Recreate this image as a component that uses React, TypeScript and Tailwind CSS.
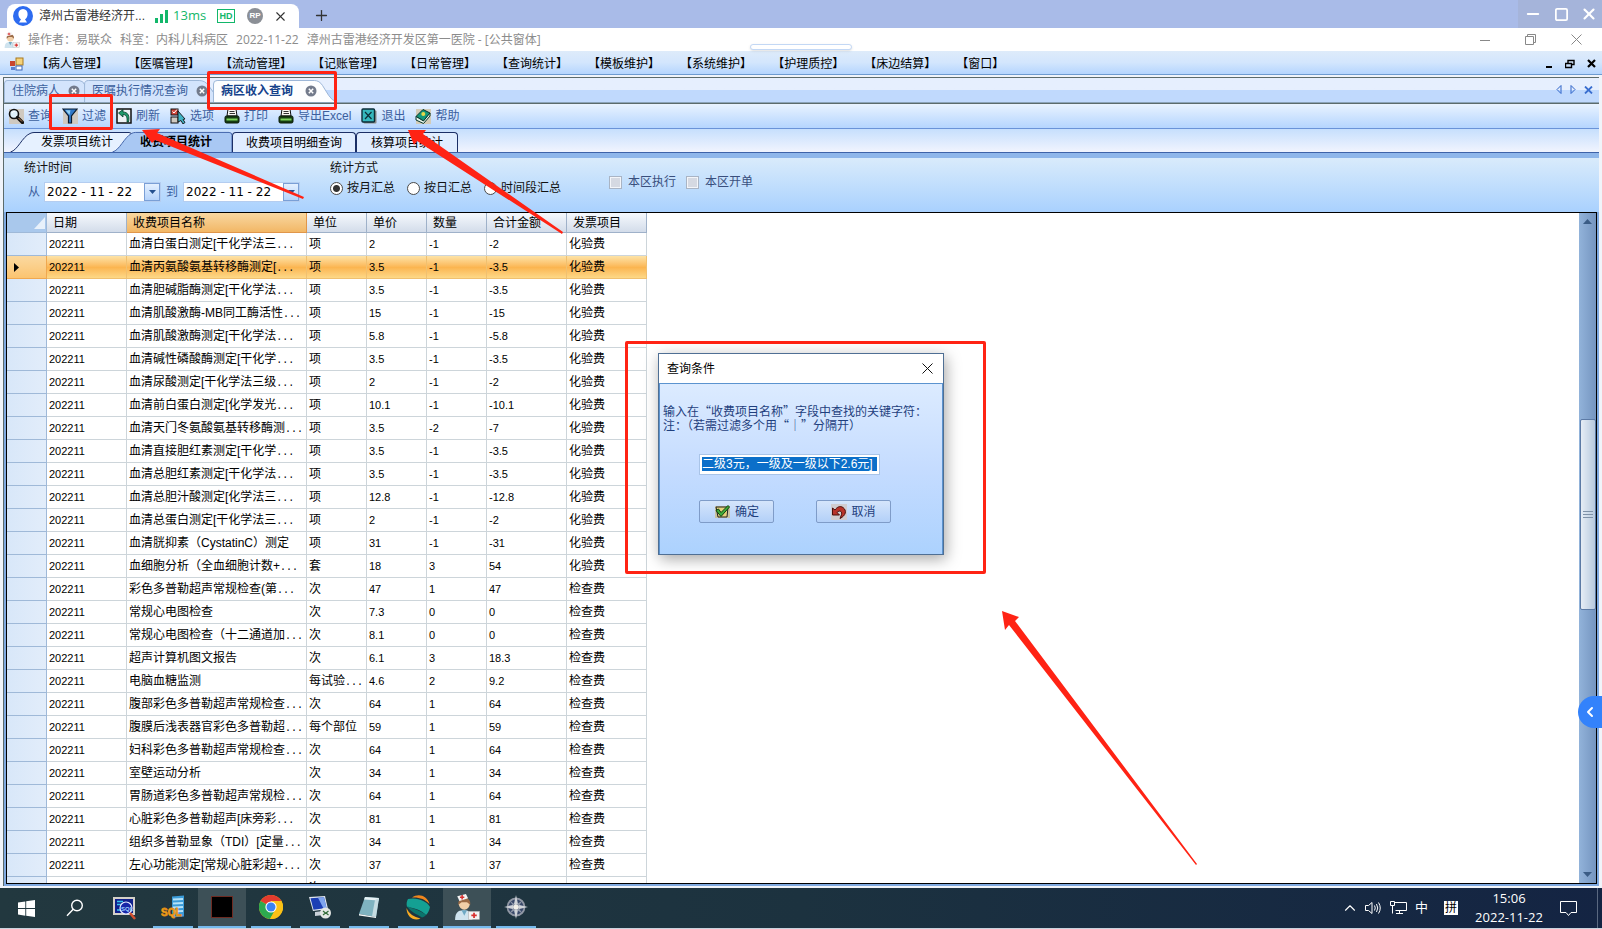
import type { ReactNode } from "react";
import { ChevronUp, ChevronLeft, Minus, Plus, Square, X } from "lucide-react";

interface ChargeRow {
  name: string;
  unit: string;
  price: string;
  count: string;
  total: string;
  invoice: string;
}

const menus = [
  "【病人管理】",
  "【医嘱管理】",
  "【流动管理】",
  "【记账管理】",
  "【日常管理】",
  "【查询统计】",
  "【模板维护】",
  "【系统维护】",
  "【护理质控】",
  "【床边结算】",
  "【窗口】",
];

const data: string[][] = [
  ["血清白蛋白测定[干化学法三...", "项", "2", "-1", "-2", "化验费"],
  ["血清丙氨酸氨基转移酶测定[...", "项", "3.5", "-1", "-3.5", "化验费"],
  ["血清胆碱脂酶测定[干化学法...", "项", "3.5", "-1", "-3.5", "化验费"],
  ["血清肌酸激酶-MB同工酶活性...", "项", "15", "-1", "-15", "化验费"],
  ["血清肌酸激酶测定[干化学法...", "项", "5.8", "-1", "-5.8", "化验费"],
  ["血清碱性磷酸酶测定[干化学...", "项", "3.5", "-1", "-3.5", "化验费"],
  ["血清尿酸测定[干化学法三级...", "项", "2", "-1", "-2", "化验费"],
  ["血清前白蛋白测定[化学发光...", "项", "10.1", "-1", "-10.1", "化验费"],
  ["血清天门冬氨酸氨基转移酶测...", "项", "3.5", "-2", "-7", "化验费"],
  ["血清直接胆红素测定[干化学...", "项", "3.5", "-1", "-3.5", "化验费"],
  ["血清总胆红素测定[干化学法...", "项", "3.5", "-1", "-3.5", "化验费"],
  ["血清总胆汁酸测定[化学法三...", "项", "12.8", "-1", "-12.8", "化验费"],
  ["血清总蛋白测定[干化学法三...", "项", "2", "-1", "-2", "化验费"],
  ["血清胱抑素（CystatinC）测定", "项", "31", "-1", "-31", "化验费"],
  ["血细胞分析（全血细胞计数+...", "套", "18", "3", "54", "化验费"],
  ["彩色多普勒超声常规检查(第...", "次", "47", "1", "47", "检查费"],
  ["常规心电图检查", "次", "7.3", "0", "0", "检查费"],
  ["常规心电图检查（十二通道加...", "次", "8.1", "0", "0", "检查费"],
  ["超声计算机图文报告", "次", "6.1", "3", "18.3", "检查费"],
  ["电脑血糖监测", "每试验...", "4.6", "2", "9.2", "检查费"],
  ["腹部彩色多普勒超声常规检查...", "次", "64", "1", "64", "检查费"],
  ["腹膜后浅表器官彩色多普勒超...", "每个部位", "59", "1", "59", "检查费"],
  ["妇科彩色多普勒超声常规检查...", "次", "64", "1", "64", "检查费"],
  ["室壁运动分析", "次", "34", "1", "34", "检查费"],
  ["胃肠道彩色多普勒超声常规检...", "次", "64", "1", "64", "检查费"],
  ["心脏彩色多普勒超声[床旁彩...", "次", "81", "1", "81", "检查费"],
  ["组织多普勒显象（TDI）[定量...", "次", "34", "1", "34", "检查费"],
  ["左心功能测定[常规心脏彩超+...", "次", "37", "1", "37", "检查费"],
  ["一", "次", "", "", "", ""],
];

const rows: ChargeRow[] = data.map(([name, unit, price, count, total, invoice]) => ({
  name,
  unit,
  price,
  count,
  total,
  invoice,
}));

const columns = [
  { title: "日期", width: "w-[80px]" },
  { title: "收费项目名称", width: "w-[180px]" },
  { title: "单位", width: "w-[60px]" },
  { title: "单价", width: "w-[60px]" },
  { title: "数量", width: "w-[60px]" },
  { title: "合计金额", width: "w-[80px]" },
  { title: "发票项目", width: "w-[80px]" },
];

/* ---------- toolbar icons ---------- */

const SearchIcon = () => (
  <svg width="16" height="16" viewBox="0 0 16 16">
    <rect x="1" y="1" width="15" height="15" fill="#cfc9c0" />
    <circle cx="6" cy="6" r="4.5" fill="#dff1fb" stroke="#111" strokeWidth="1.6" />
    <path d="M4 5a2.5 2.5 0 0 1 3-1.500" stroke="#fff" fill="none" />
    <path d="M9.500 9.500l5 5" stroke="#111" strokeWidth="3.200" strokeLinecap="round" />
    <path d="M10.500 10l3.500 3.500" stroke="#c98a5a" strokeWidth="1" />
  </svg>
);

const FilterIcon = () => (
  <svg width="16" height="16" viewBox="0 0 16 16">
    <rect x="1" y="1" width="15" height="15" fill="#cfc9c0" />
    <path d="M1 1h14L9.500 8v7h-3V8z" fill="#2f78c8" stroke="#0b1c30" strokeWidth="1.200" />
    <path d="M3.500 2.200h5L7.500 7z" fill="#8fd0f5" />
  </svg>
);

const RefreshIcon = () => (
  <svg width="16" height="16" viewBox="0 0 16 16">
    <path d="M1 1h14v14H1z" fill="#eef3f5" stroke="#111" strokeWidth="1.500" />
    <path d="M11 14c.5-5-1-7.500-4-7.500V9L2.500 5 7 1.500V4c5 0 7 4 5.500 10z" fill="#1f9a6a" stroke="#063d2a" strokeWidth=".8" />
  </svg>
);

const OptionsIcon = () => (
  <svg width="16" height="16" viewBox="0 0 16 16">
    <rect x="1" y="1" width="7" height="6" fill="#d04a3e" stroke="#111" />
    <path d="M2.500 3.500l1.500 1.500 3-3.500" stroke="#fff" fill="none" />
    <rect x="1" y="9" width="7" height="6" fill="#cfc9c0" stroke="#111" />
    <path d="M8 3l7 8-2 .5 2 3-2 1.500-2-3.500L8 14z" fill="#3fb3c4" stroke="#111" strokeWidth=".9" />
  </svg>
);

const PrinterIcon = () => (
  <svg width="16" height="16" viewBox="0 0 16 16">
    <path d="M4 1h8l1 7H3z" fill="#f7f7f2" stroke="#111" />
    <path d="M5.500 3.500h5M5.500 5.500h5.500" stroke="#333" />
    <rect x="1" y="8" width="14" height="7" rx="1.500" fill="#163c12" stroke="#0a1a08" />
    <rect x="2.500" y="10.500" width="11" height="2" fill="#7bd35a" />
  </svg>
);

const ExitIcon = () => (
  <svg width="16" height="16" viewBox="0 0 16 16">
    <rect x="2.500" y="2.500" width="13" height="13" rx="1" fill="#8a8a86" />
    <rect x="1" y="1" width="12.500" height="13" rx="1" fill="#35b7bd" stroke="#0c2d38" strokeWidth="1.400" />
    <path d="M4 4l6.500 7M10.500 4L4 11" stroke="#0c2d38" strokeWidth="1.200" />
  </svg>
);

const HelpIcon = () => (
  <svg width="16" height="16" viewBox="0 0 16 16">
    <rect x="1" y="1" width="15" height="15" fill="#d3ccb8" />
    <path d="M1 8.500L8 1.500l7 3.500-6.500 8z" fill="#14967a" stroke="#06352b" />
    <path d="M1 8.500v3.500l7.500 3.500L15 8V5l-6.500 8z" fill="#e8f4ea" stroke="#06352b" />
    <circle cx="8.300" cy="6" r="2" fill="#e6d84a" />
  </svg>
);

const tools: { label: string; icon: ReactNode }[] = [
  { label: "查询", icon: <SearchIcon /> },
  { label: "过滤", icon: <FilterIcon /> },
  { label: "刷新", icon: <RefreshIcon /> },
  { label: "选项", icon: <OptionsIcon /> },
  { label: "打印", icon: <PrinterIcon /> },
  { label: "导出Excel", icon: <PrinterIcon /> },
  { label: "退出", icon: <ExitIcon /> },
  { label: "帮助", icon: <HelpIcon /> },
];

const NurseIcon = ({ size }: { size: number }) => (
  <svg width={size} height={size} viewBox="0 0 24 24">
    <path d="M1 24c0-6 2-9 8-9s8 3 8 9z" fill="#cfe3ee" />
    <path d="M7 15l2.500 5 2.500-5z" fill="#6fa9c4" />
    <circle cx="9.500" cy="9.500" r="5" fill="#f1cfa8" />
    <path d="M4 10C3.500 5 7 3.500 10 3.500S15.500 6 15 10L12 7.500 7 7.500z" fill="#9a6a45" />
    <path d="M3 2l8-2 2 4-8 2.500z" fill="#f4f4f4" />
    <path d="M7.500 1v4M5.500 3h4" stroke="#d8302f" strokeWidth="1.400" />
    <rect x="13.500" y="16" width="10" height="7.500" fill="#f2f2f2" stroke="#aaa" strokeWidth=".5" />
    <path d="M18.500 17.200v5M16 19.700h5" stroke="#d8302f" strokeWidth="1.600" />
  </svg>
);

/* ---------- header ---------- */

function RemoteBar() {
  return (
    <header className="flex h-7 shrink-0 items-end bg-[#a9bbe8]">
      <div className="ml-[7px] flex h-6 w-[292px] items-center rounded-t-lg bg-white pl-1.5 text-[#333]">
        <svg width="20" height="20" viewBox="0 0 20 20">
          <circle cx="10" cy="10" r="10" fill="#2d6bf0" />
          <path d="M10 3c-3 0-4.600 2.200-4.600 5 0 2.500 1 4.500 2.600 5.300L6 16.500h8l-2-3.200c1.600-.8 2.600-2.800 2.600-5.300 0-2.800-1.600-5-4.600-5z" fill="#fff" />
        </svg>
        <span className="ml-1.5">漳州古雷港经济开...</span>
        <svg className="ml-2.5" width="14" height="13" viewBox="0 0 14 13" fill="#12b76a">
          <rect x="0" y="8" width="3" height="5" />
          <rect x="5" y="4" width="3" height="9" />
          <rect x="10" y="0" width="3" height="13" />
        </svg>
        <span className="ml-1 w-[38px] font-['Open_Sans',sans-serif] text-[13px] text-[#12b76a]">13ms</span>
        <span className="ml-1.5 flex h-3.5 w-[18px] items-center justify-center border border-[#12b76a] text-[9px] font-bold text-[#12b76a]">
          HD
        </span>
        <span className="ml-3 flex size-4 items-center justify-center rounded-full bg-[#8b8f96] text-[8px] font-bold text-white">
          RP
        </span>
        <button aria-label="关闭标签" className="ml-[10px]">
          <X size={15} strokeWidth={1.800} />
        </button>
      </div>
      <button aria-label="新建标签" className="mb-1 ml-3.5 text-[#333]">
        <Plus size={17} strokeWidth={1.800} />
      </button>
      <div className="ml-auto flex h-7 w-[84px] items-center justify-between bg-[#a5b4da] pr-1 pl-1.5 text-white">
        <button aria-label="最小化">
          <Minus size={18} strokeWidth={2.500} />
        </button>
        <button aria-label="最大化">
          <Square size={15} strokeWidth={2.800} />
        </button>
        <button aria-label="关闭">
          <X size={18} strokeWidth={2.800} />
        </button>
      </div>
    </header>
  );
}

function TitleBar() {
  return (
    <div className="relative flex h-[23px] shrink-0 items-center bg-white pl-1 text-[#8c8c8c]">
      <NurseIcon size={16} />
      <p className="ml-2 flex gap-2 whitespace-nowrap font-['Open_Sans','Noto_Sans_CJK_SC',sans-serif]">
        <span>操作者：易联众</span>
        <span>科室：内科儿科病区</span>
        <span>2022-11-22</span>
        <span>漳州古雷港经济开发区第一医院 - [公共窗体]</span>
      </p>
      <div className="mr-5 ml-auto flex items-center gap-[35px]">
        <svg width="10" height="10" stroke="#888" fill="none">
          <path d="M0 5.500h10" />
        </svg>
        <svg width="11" height="11" stroke="#888" fill="none">
          <path d="M.5 2.500h8v8h-8zM2.500 2.500v-2h8v8h-2" />
        </svg>
        <svg width="11" height="11" stroke="#888" fill="none">
          <path d="M.5.5l10 10M10.500.5l-10 10" />
        </svg>
      </div>
      <div className="absolute top-4 left-[750px] h-1.5 w-[102px] rounded-sm border border-[#c3d8f5] bg-white shadow" />
    </div>
  );
}

function MenuBar() {
  return (
    <nav className="flex h-6 shrink-0 items-center border-b border-[#6d9bd0] bg-linear-to-b from-[#deebfa] via-[#d3e6fd] to-[#b5d5fe] pt-0.5 pl-2.5 text-black">
      <svg width="14" height="14" viewBox="0 0 14 14">
        <rect x="0" y="4" width="5" height="5" fill="#c8452e" />
        <rect x="6" y="1" width="7" height="7" fill="#f5d27a" stroke="#a8781e" />
        <rect x="1" y="10" width="4" height="3" fill="#5b7fd0" />
        <rect x="6" y="9" width="6" height="4" fill="#fff" stroke="#3c66b8" />
      </svg>
      <div className="flex pl-0.5">
        {menus.map((menu) => (
          <button key={menu} className="px-[10px] whitespace-nowrap">
            {menu}
          </button>
        ))}
      </div>
      <div className="mr-[6px] ml-auto flex items-center gap-3">
        <svg width="8" height="10">
          <path d="M1 8h6" stroke="#000" strokeWidth="2" />
        </svg>
        <svg width="10" height="10" fill="none" stroke="#000">
          <path d="M.5 4.500h6v4h-6zM3 4V1.500h6v4H7" strokeWidth="1.400" />
        </svg>
        <svg width="9" height="9">
          <path d="M1 1l7 7M8 1L1 8" stroke="#000" strokeWidth="2.200" />
        </svg>
      </div>
    </nav>
  );
}

const CloseBadge = () => (
  <svg width="12" height="12" viewBox="0 0 12 12">
    <circle cx="6" cy="6" r="5.500" fill="#737b8c" />
    <path d="M3.800 3.800l4.400 4.400M8.200 3.800L3.800 8.200" stroke="#fff" strokeWidth="1.500" />
  </svg>
);

function DocTab({ label, active, width }: { label: string; active?: boolean; width: string }) {
  return (
    <div className={`relative -mr-3 h-[22px] ${width}`}>
      <svg className="absolute inset-0 h-full w-full" viewBox="0 0 120 22" preserveAspectRatio="none">
        <path
          d="M.5 22V4Q.5 .5 4 .5H98q5 0 8 5l6 10q3 5 8 6.500"
          fill={active ? "#fdfeff" : "#d3e4fc"}
          stroke="#9db7d8"
          vectorEffect="non-scaling-stroke"
        />
      </svg>
      <button
        className={
          active
            ? "relative flex h-full items-center gap-3 pl-2 font-bold whitespace-nowrap text-[#15428b]"
            : "relative flex h-full items-center gap-2 pl-2 whitespace-nowrap text-[#3a5f9c]"
        }
      >
        {label}
        <CloseBadge />
      </button>
    </div>
  );
}

function DocTabs() {
  return (
    <div className="flex h-[25px] shrink-0 items-end border-b border-[#8ba3b8] bg-linear-to-b from-[#e6effe] from-50% to-[#c0d9fd] to-50%">
      <DocTab label="住院病人" width="w-[92px]" />
      <DocTab label="医嘱执行情况查询" width="w-[141px]" />
      <DocTab label="病区收入查询" width="w-[124px]" active />
      <div className="mr-1.5 mb-2 ml-auto flex items-center gap-2">
        <svg width="6" height="9" fill="none" stroke="#2c63c8">
          <path d="M5 .5v8L1 4.500z" />
        </svg>
        <svg width="6" height="9" fill="none" stroke="#2c63c8">
          <path d="M1 .5v8l4-4z" />
        </svg>
        <svg width="9" height="8">
          <path d="M1 .5l7 7M8 .5l-7 7" stroke="#3a6fd0" strokeWidth="1.800" />
        </svg>
      </div>
    </div>
  );
}

function ToolBar() {
  return (
    <div className="flex h-[26px] shrink-0 items-center gap-2.5 border-t border-b border-t-[#5c6b6b] border-b-[#6a93d8] bg-linear-to-b from-[#e9f3ff] to-[#b5d5fe] pl-1 text-[#3c5f9e]">
      {tools.map((tool) => (
        <button key={tool.label} className="flex items-center gap-1 whitespace-nowrap">
          {tool.icon}
          {tool.label}
        </button>
      ))}
    </div>
  );
}

function ReportTabs() {
  return (
    <div className="flex h-6 shrink-0 items-end border-b border-[#3f62a8] bg-linear-to-b from-[#c6dffd] to-[#f1f4fe] pl-1.5 text-black">
      <button className="relative h-5 w-[122px] pl-3">
        <svg className="absolute inset-0 h-full w-full" viewBox="0 0 122 20" preserveAspectRatio="none">
          <path d="M.5 20C8 18 12 5 20 1.500Q22 .5 24 .5H119q3 0 3 3V20" fill="#e6f1ff" stroke="#1b2f66" />
        </svg>
        <span className="relative">发票项目统计</span>
      </button>
      <button className="relative -ml-5 h-[21px] w-[120px] pl-2 font-bold">
        <svg className="absolute inset-0 h-full w-full" viewBox="0 0 122 22" preserveAspectRatio="none">
          <path d="M.5 22C8 20 12 7 20 2.500Q22 1.500 24 1.500H119q3 0 3 3V22" fill="#a9c8f3" stroke="#3f62a8" />
        </svg>
        <span className="relative">收费项目统计</span>
      </button>
      <button className="h-5 w-[124px] rounded-t-sm border border-b-0 border-[#1b2f66] bg-[#e0edff]">收费项目明细查询</button>
      <button className="h-5 w-[102px] rounded-t-sm border border-b-0 border-[#1b2f66] bg-[#e0edff]">核算项目统计</button>
    </div>
  );
}

function DateBox({ id }: { id: string }) {
  return (
    <div className="flex h-5 w-[117px] border border-[#b4cdf0] bg-white">
      <input
        id={id}
        type="text"
        defaultValue="2022 - 11 - 22"
        className="min-w-0 flex-1 pl-0.5 font-['DejaVu_Sans',sans-serif] text-[12px] text-black outline-none"
      />
      <button aria-label="选择日期" className="flex w-4 items-center justify-center border border-[#7a9fd6] bg-linear-to-b from-[#e4f0ff] to-[#b5d3fb]">
        <svg width="7" height="4">
          <path d="M0 0h7L3.500 4z" fill="#24508f" />
        </svg>
      </button>
    </div>
  );
}

function RadioItem({ label, checked }: { label: string; checked?: boolean }) {
  return (
    <label className="flex items-center gap-1">
      <input
        type="radio"
        name="mode"
        defaultChecked={checked}
        className="size-[13px] appearance-none rounded-full border border-[#4a4a4a] bg-white checked:bg-[radial-gradient(circle,#333_3px,#fff_4px)]"
      />
      {label}
    </label>
  );
}

function CheckItem({ label }: { label: string }) {
  return (
    <label className="flex items-center gap-1.5 text-[#3a4f7d]">
      <input type="checkbox" className="size-[13px] appearance-none border border-[#a9b4c4] bg-[#d5d9e2] shadow-[inset_0_0_0_1px_#f3f5f9]" />
      {label}
    </label>
  );
}

function QueryPanel() {
  return (
    <section className="flex h-[59px] shrink-0 border-t-[5px] border-[#8fb6ea] bg-linear-to-b from-[#d9ebfb] to-[#a9d1fe] pt-0.5 text-[#111]">
      <div className="w-[306px] pl-5">
        <p className="h-4">统计时间</p>
        <div className="mt-1.5 flex items-center gap-1 text-[#3c5f9e]">
          <label htmlFor="from" className="pl-1">从</label>
          <DateBox id="from" />
          <label htmlFor="to" className="px-px">到</label>
          <DateBox id="to" />
        </div>
      </div>
      <div className="w-[279px] pl-5">
        <p className="h-4">统计方式</p>
        <div className="mt-1 flex items-center gap-3">
          <RadioItem label="按月汇总" checked />
          <RadioItem label="按日汇总" />
          <RadioItem label="时间段汇总" />
        </div>
      </div>
      <div className="flex gap-2.5 self-start pt-3.5 pl-5">
        <CheckItem label="本区执行" />
        <CheckItem label="本区开单" />
      </div>
    </section>
  );
}

/* ---------- grid ---------- */

// long values are cut by the grid and end in widely spaced dots
function CellText({ text }: { text: string }) {
  if (!text.endsWith("...")) return <>{text}</>;
  return (
    <>
      {text.slice(0, -3)}
      <span className="font-['Liberation_Mono',monospace] text-[10px]">...</span>
    </>
  );
}

function ChargeTable() {
  const selected = 1;
  return (
    <table className="w-[640px] table-fixed border-separate border-spacing-0 text-left text-black">
      <thead>
        <tr className="h-5">
          <th className="w-[40px] border-r border-b border-[#9fb9d8] bg-[#a9c8ec]">
            <svg className="ml-auto" width="14" height="14">
              <path d="M13 1v12H2z" fill="#e8f1fb" />
            </svg>
          </th>
          {columns.map((col, i) => (
            <th
              key={col.title}
              className={`${col.width} border-r border-b px-1.5 font-normal ${
                i === 1
                  ? "border-[#e0964a] bg-linear-to-b from-[#f8d7a0] to-[#f2b765]"
                  : "border-[#9fb1c9] bg-linear-to-b from-[#f6f9fd] to-[#d3dcea]"
              }`}
            >
              {col.title}
            </th>
          ))}
        </tr>
      </thead>
      <tbody>
        {rows.map((row, i) => {
          const on = i === selected;
          const cell = on
            ? "border-r border-b border-[#f0c070] px-0.5 whitespace-nowrap"
            : "border-r border-b border-[#cdd5da] px-0.5 whitespace-nowrap";
          const num = `${cell} font-['Liberation_Sans',sans-serif] text-[11px]`;
          return (
            <tr
              key={i}
              className={on ? "h-[23px] bg-linear-to-b from-[#fde3a6] via-[#fbb550] to-[#fddc8c]" : "h-[23px]"}
            >
              <td
                className={
                  on
                    ? "border-r border-b border-[#f0a850] bg-linear-to-b from-[#fbd9a0] to-[#fbc470] pl-[7px]"
                    : "border-r border-b border-[#9fb9d8] bg-linear-to-r from-[#d8e7f9] to-[#e2edfa]"
                }
              >
                {on && (
                  <svg width="5" height="9">
                    <path d="M0 0l5 4.500L0 9z" fill="#000" />
                  </svg>
                )}
              </td>
              <td className={num}>{row.invoice && "202211"}</td>
              <td className={cell}>
                <CellText text={row.name} />
              </td>
              <td className={cell}>
                <CellText text={row.unit} />
              </td>
              <td className={num}>{row.price}</td>
              <td className={num}>{row.count}</td>
              <td className={num}>{row.total}</td>
              <td className={cell}>{row.invoice}</td>
            </tr>
          );
        })}
      </tbody>
    </table>
  );
}

function GridScrollBar() {
  return (
    <div className="flex w-[17px] shrink-0 flex-col items-center bg-linear-to-r from-[#92b3da] to-[#7595c0]">
      <svg className="mt-1.5 shrink-0" width="9" height="5">
        <path d="M0 5h9L4.500 0z" fill="#3b5c85" />
      </svg>
      <div className="flex-[195]" />
      <div className="flex w-4 flex-[190] flex-col items-center justify-center gap-0.5 rounded-xs border border-[#5c7aa5] bg-linear-to-r from-[#e6edf5] to-[#b7c9de]">
        <i className="h-px w-2.5 bg-[#7f92a8]" />
        <i className="h-px w-2.5 bg-[#7f92a8]" />
        <i className="h-px w-2.5 bg-[#7f92a8]" />
      </div>
      <div className="flex-[262]" />
      <svg className="mb-1.5 shrink-0" width="9" height="5">
        <path d="M0 0h9L4.500 5z" fill="#3b5c85" />
      </svg>
    </div>
  );
}

/* ---------- dialog ---------- */

function FilterDialog() {
  return (
    <div
      role="dialog"
      aria-labelledby="dialog-title"
      className="absolute top-[353px] left-[658px] w-[286px] border border-[#4f6f94] bg-white shadow-[2px_4px_14px_rgba(0,0,0,0.35)]"
    >
      <div className="flex h-[29px] items-center justify-between pr-2.5 pl-2 text-black">
        <h2 id="dialog-title">查询条件</h2>
        <button aria-label="关闭对话框">
          <svg width="11" height="11" stroke="#111" fill="none">
            <path d="M.5.5l10 10M10.500.5l-10 10" />
          </svg>
        </button>
      </div>
      <div className="h-[171px] border-t border-r border-l border-[#5b93cf] bg-linear-to-b from-[#dcebff] via-[#c5dcff] to-[#acd2fe] pt-5 text-[#1f3f7d]">
        <label htmlFor="keyword" className="block pl-[3px] font-['Noto_Sans_CJK_SC',sans-serif] leading-[14px] whitespace-nowrap">
          输入在“收费项目名称”字段中查找的关键字符：
          <br />
          注：（若需过滤多个用“｜”分隔开）
        </label>
        <div className="mt-[22px] ml-[39px] h-[21px] w-[181px] border border-[#a9c4e8] bg-white p-0.5">
          <input
            id="keyword"
            type="text"
            defaultValue="二级3元，一级及一级以下2.6元]"
            className="block h-[14px] w-full bg-[#0b6fc9] text-white outline-none"
          />
        </div>
        <div className="mt-[25px] flex gap-[42px] pl-[39px]">
          <button className="flex h-[23px] w-[75px] items-center justify-center gap-1 rounded-xs border border-[#7f9cc8] bg-linear-to-b from-[#d5e5fb] to-[#b3d0f8]">
            <svg width="17" height="16" viewBox="0 0 17 16">
              <path d="M1 2h15v12H1z" fill="#c9c3a0" />
              <path d="M2 3h12l-1 10H4z" fill="#e5d27a" stroke="#222" />
              <path d="M2 6.500l5 6L15.500 3 14 1.500 7 8.500 4.500 5z" fill="#3fae3a" stroke="#12400f" />
            </svg>
            确定
          </button>
          <button className="flex h-[23px] w-[75px] items-center justify-center gap-1 rounded-xs border border-[#7f9cc8] bg-linear-to-b from-[#d5e5fb] to-[#b3d0f8]">
            <svg width="16" height="16" viewBox="0 0 16 16">
              <path d="M0 0h16v16H0z" fill="#d0ccd0" />
              <path d="M1.500 4v7h7L6 8.500c3-3 6-1 4 3.500l-1 2.500c6-3 7-8 3-11-3-2-6-.5-8 2.500z" fill="#b8332a" stroke="#4a0e0a" />
            </svg>
            取消
          </button>
        </div>
      </div>
    </div>
  );
}

/* ---------- taskbar ---------- */

const taskIcons: { name: string; state?: "open" | "active"; icon: ReactNode }[] = [
  {
    name: "开始",
    icon: (
      <svg width="17" height="17" viewBox="0 0 17 17" fill="#fff">
        <path d="M0 2.400l7.300-1v6.700H0zM8.200 1.200L17 0v8.100H8.200zM0 9h7.300v6.700L0 14.600zM8.200 9H17v8l-8.800-1.200z" />
      </svg>
    ),
  },
  {
    name: "搜索",
    icon: (
      <svg width="18" height="18" viewBox="0 0 18 18" fill="none" stroke="#fff" strokeWidth="1.400">
        <circle cx="11" cy="6.500" r="5.300" />
        <path d="M7.200 10.300L1 16.800" />
      </svg>
    ),
  },
  {
    name: "SQL 跟踪",
    icon: (
      <svg width="24" height="24" viewBox="0 0 24 24">
        <rect x="1" y="1" width="22" height="18" fill="#d4d0c8" />
        <rect x="3" y="3" width="18" height="14" fill="#10208c" />
        <path d="M5 5.500h6M5 8.500h4M5 14h4" stroke="#38c4f0" strokeWidth="1.500" />
        <circle cx="14" cy="12" r="6" fill="#1826a8" stroke="#e4e8ff" strokeWidth="1.200" />
        <text x="9" y="14.500" fontSize="6" fontWeight="700" fill="#9fd0ff" fontFamily="Liberation Sans">SQL</text>
        <path d="M18 17l5 6" stroke="#d4502f" strokeWidth="2.500" />
      </svg>
    ),
  },
  {
    name: "SQL 工具",
    state: "open",
    icon: (
      <svg width="24" height="24" viewBox="0 0 24 24">
        <path d="M11 1.500L23 .5v21l-12 1z" fill="#3b9bd8" />
        <path d="M12 4.500l10-.5M12 8.500l10-.5M12 12.500l10-.5M12 16.500l10-.5" stroke="#b5e2f8" strokeWidth="1.800" />
        <text x="0" y="21" fontSize="10" fontWeight="700" fill="#ffb52a" stroke="#e08a10" strokeWidth=".8" fontFamily="Liberation Sans">SQL</text>
      </svg>
    ),
  },
  {
    name: "命令行",
    state: "active",
    icon: (
      <svg width="22" height="22">
        <rect x=".5" y=".5" width="21" height="21" fill="#000" stroke="#6e2b22" />
      </svg>
    ),
  },
  {
    name: "浏览器",
    state: "open",
    icon: (
      <svg width="24" height="24" viewBox="0 0 24 24">
        <circle cx="12" cy="12" r="12" fill="#fbc116" />
        <path d="M12 12L1.600 6A12 12 0 0 1 22.400 6z" fill="#e33b2e" />
        <path d="M1.600 6A12 12 0 0 0 11 24l5.200-9.500L12 12z" fill="#2da94f" />
        <path d="M22.400 6H12v6l4.700 2.700L11 24A12 12 0 0 0 22.400 6z" fill="#fbc116" />
        <circle cx="12" cy="12" r="5.600" fill="#fff" />
        <circle cx="12" cy="12" r="4.500" fill="#3b82f0" />
      </svg>
    ),
  },
  {
    name: "远程桌面",
    state: "open",
    icon: (
      <svg width="24" height="24" viewBox="0 0 24 24">
        <path d="M1 2l16-1 3 13-15 2z" fill="#dfe6ee" />
        <path d="M2.500 3.200l13.500-1 2.500 10.800-13 1.700z" fill="#1c3fb4" />
        <path d="M10 2.700l6-.5 2.500 10.800-3 .4z" fill="#7fa5ee" />
        <path d="M7 17l8-1 1 4-9 1z" fill="#c9d0d8" />
        <circle cx="17.500" cy="18" r="5.500" fill="#e4e7e4" />
        <path d="M15 16l2.500 2-2.500 2M20.500 16L18 18l2.500 2" stroke="#2f6a35" fill="none" strokeWidth="1.200" />
      </svg>
    ),
  },
  {
    name: "记事本",
    state: "open",
    icon: (
      <svg width="24" height="24" viewBox="0 0 24 24">
        <path d="M8 2l14 1-3 19-17-3z" fill="#7fb3c0" />
        <path d="M8 2l14 1-.4 2.500L7 4.400z" fill="#e7f2f5" />
        <path d="M18 5l4-2-3 19-4-.7z" fill="#c5dce2" />
        <path d="M2 19l17 3v1L2 20.500z" fill="#f5f8f8" />
      </svg>
    ),
  },
  {
    name: "数据库客户端",
    state: "open",
    icon: (
      <svg width="26" height="26" viewBox="0 0 26 26">
        <path d="M7 3.500C13-1 22 1 24.500 10 20 5 14 3 7 3.500z" fill="#f0861d" />
        <path d="M3 5c9-2 19 2 22 8-1 4-2 6-4 8C16 16 10 14 2 13 1 9 2 7 3 5z" fill="#14a093" />
        <path d="M2 12c6 3 13 4 19 9-1 1-2 2-4 2.500C12 20 5 18 2 12z" fill="#0b746c" />
        <path d="M1.500 14C4 20 9 23 15.500 24.500 9 27.500 1.500 23 1.500 14z" fill="#f9ab22" />
      </svg>
    ),
  },
  { name: "护士工作站", state: "active", icon: <NurseIcon size={26} /> },
  {
    name: "导航",
    state: "open",
    icon: (
      <svg width="24" height="24" viewBox="0 0 24 24">
        <circle cx="12" cy="12" r="8.500" fill="#39496a" stroke="#9097a4" strokeWidth="1.800" />
        <path d="M12 0l2.200 9.800L24 12l-9.800 2.200L12 24l-2.200-9.800L0 12l9.800-2.200z" fill="#cfd3d8" />
        <path d="M5.500 5.500l6 4.500 7-4.500-4.500 6.500 4.500 6.500-6.500-4-6.500 4 4.500-6.500z" fill="#8f98a8" />
        <circle cx="12" cy="12" r="2.500" fill="#f3f1ea" />
      </svg>
    ),
  },
];

function TaskBar() {
  return (
    <footer className="flex h-[41px] shrink-0 border-b border-[#c9d3de] bg-linear-to-r from-[#22383f] via-[#1c323f] to-[#142443] text-white">
      <div className="flex gap-px pl-0.5">
        {taskIcons.map((task) => (
          <button
            key={task.name}
            aria-label={task.name}
            className={`flex w-12 flex-col items-center ${task.state === "active" ? "bg-[#3d5057]" : ""}`}
          >
            <span className="flex flex-1 items-center">{task.icon}</span>
            {task.state && (
              <span className={task.state === "active" ? "h-0.5 w-12 bg-[#76b9ed]" : "h-0.5 w-10 bg-[#76b9ed]"} />
            )}
          </button>
        ))}
      </div>
      <div className="mr-1 ml-auto flex items-center border-r border-[#5a6880] pr-5">
        <ChevronUp size={18} strokeWidth={1.500} />
        <svg className="ml-1.5" width="17" height="14" viewBox="0 0 17 14" fill="none" stroke="#fff">
          <path d="M.5 4.500h3L7 1.500v11L3.500 9.500h-3zM9.500 4.500q1.500 2.500 0 5M11.500 3q2.500 4 0 8M13.500 1.500q3.500 5.500 0 11" />
        </svg>
        <svg className="ml-2" width="17" height="14" viewBox="0 0 17 14" fill="none" stroke="#fff">
          <path d="M4.500 1.500h12v8h-11M.5.5h4v4h-4zM2.500 4.500v8M6 12.500h7M9.500 9.500v3" />
        </svg>
        <span className="ml-2 text-[13px]">中</span>
        <span className="ml-4 flex size-3.5 items-center justify-center bg-white text-[12px] leading-3 text-black">拼</span>
        <div className="ml-4 flex w-[70px] flex-col items-center font-['Open_Sans',sans-serif] text-[13px] leading-[19px]">
          <span>15:06</span>
          <span>2022-11-22</span>
        </div>
        <button aria-label="通知" className="ml-4">
          <svg width="17" height="17" viewBox="0 0 17 17" fill="none" stroke="#fff">
            <path d="M.5 1.500h16v11h-5.500l-2.500 3-2.500-3H.5z" />
          </svg>
        </button>
      </div>
    </footer>
  );
}

/* red marks drawn by hand over the window */
function Annotations() {
  return (
    <div className="pointer-events-none absolute inset-0">
      <div className="absolute top-[94px] left-[49px] h-9 w-[64px] rounded-xs border-3 border-[#ff2314]" />
      <div className="absolute top-[71px] left-[207px] h-[39px] w-[130px] rounded-xs border-3 border-[#ff2314]" />
      <div className="absolute top-[341px] left-[625px] h-[233px] w-[361px] rounded-xs border-3 border-[#ff2314]" />
      <svg className="absolute inset-0 h-full w-full" fill="#ff2314">
        <path d="M142 130L160 129L157 133L304 197L303 199L155 140L152 143z" />
        <path d="M408 130L426 130L423 134L563 232L562 234L417 141L414 145z" />
        <path d="M1002 611L1019 617L1015 621L1197 864L1196 865L1009 625L1005 630z" />
      </svg>
    </div>
  );
}

export default function App() {
  return (
    <div className="relative flex h-screen flex-col overflow-hidden bg-[#f0f4fa] font-['Liberation_Sans','Noto_Sans_CJK_SC',sans-serif] text-xs">
      <RemoteBar />
      <TitleBar />
      <MenuBar />
      <main className="mx-[3px] my-0.5 flex min-h-0 flex-1 flex-col border-t border-l border-[#5c6b6b] bg-[#7fa9e0]">
        <DocTabs />
        <ToolBar />
        <ReportTabs />
        <QueryPanel />
        <div className="mx-0.5 mb-0.5 flex min-h-0 flex-1 overflow-hidden border border-black bg-white">
          <div className="flex-1 overflow-hidden">
            <ChargeTable />
          </div>
          <GridScrollBar />
        </div>
      </main>
      <TaskBar />
      <button
        aria-label="展开侧栏"
        className="absolute top-[696px] right-0 flex h-8 w-6 items-center justify-center rounded-l-full bg-[#3382fb] text-white"
      >
        <ChevronLeft size={16} strokeWidth={3} />
      </button>
      <FilterDialog />
      <Annotations />
    </div>
  );
}
